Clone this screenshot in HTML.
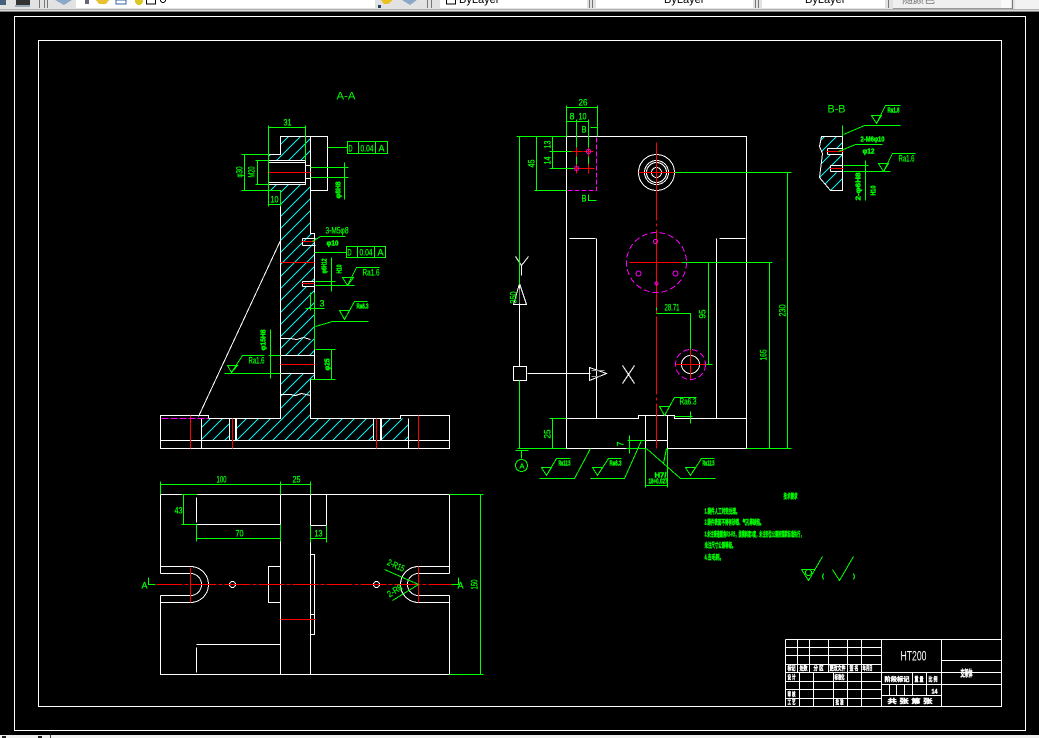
<!DOCTYPE html>
<html><head><meta charset="utf-8"><style>
html,body{margin:0;padding:0;background:#000;width:1039px;height:738px;overflow:hidden}
svg{display:block}
text{font-family:"Liberation Sans","Noto Sans CJK SC",sans-serif}
.w{stroke:#fff;fill:none}
.g{stroke:#0f0;fill:none}
.r{stroke:#f00;fill:none}
.m{stroke:#f0f;fill:none}
.t{fill:#0f0;stroke:#0f0;stroke-width:.25;font-size:9px}
.s{fill:#0f0;stroke:#0f0;stroke-width:.4;font-size:7px;font-weight:bold}
.c{fill:#fff;stroke:#fff;stroke-width:.4;font-size:6px;font-weight:bold}
.b{fill:#000;stroke:none;font-size:11px}
</style></head><body>
<svg width="1039" height="738" viewBox="0 0 1039 738" xmlns="http://www.w3.org/2000/svg" shape-rendering="crispEdges">
<defs>
<clipPath id="ca"><path d="M280 136H310V160H280ZM280 184H310V233H314V281H302V286H314V355H280ZM280 373H314V379H310V418H373V440H380V418H408V440H236V418H229V440H201V418H280ZM268 154H280V160H268ZM268 184H280V190H268Z"/></clipPath>
<clipPath id="cb"><path d="M821 136H842V148H827V154H842V165H830V172H842V190H830L819 177L822 153L819 146Z"/></clipPath>
</defs>
<rect width="1039" height="738" fill="#000"/>
<!-- toolbar -->
<rect width="1039" height="9" fill="#e2e2e2"/>
<rect y="9" width="1039" height="1" fill="#b0b0b0"/>
<rect y="10" width="1039" height="1" fill="#d8d8d8"/>
<rect y="11" width="1039" height="1" fill="#808080"/>
<rect x="76" width="299" height="8" fill="#fff"/>
<rect x="440" width="147" height="8" fill="#fff"/>
<rect x="596" width="157" height="8" fill="#fff"/>
<rect x="762" width="123" height="8" fill="#fff"/>
<rect x="893" width="118" height="8" fill="#f0f0f0"/>
<rect x="1001" width="10" height="8" fill="#fafafa"/>
<rect x="893" y="8" width="119" height="1" fill="#999"/>
<rect x="1015" width="24" height="9" fill="#f2f2f2"/>
<path d="M39.5 0V8M44.5 0V8M47.5 0V8M427.5 0V8M431.5 0V8M589.5 0V8M592.5 0V8M755.5 0V8M758.5 0V8M888.5 0V8M1012.5 0V9" stroke="#777" fill="none"/>
<rect x="0" y="0" width="6" height="5" fill="#47607c"/>
<rect x="16" y="0" width="14" height="5" fill="#333"/>
<rect x="15" y="5" width="15" height="2" fill="#9ab"/>
<path d="M55 0L64 5L72 0Z" fill="#8aa8c8"/>
<rect x="85" y="0" width="4" height="4" fill="#667"/>
<path d="M96 0H109L106 4H99Z" fill="#e8c030"/>
<rect x="116" y="0" width="10" height="4" fill="#fff" stroke="#36a"/>
<circle cx="139" cy="1" r="4" fill="#d8c820"/>
<rect x="146.5" y="-2" width="9" height="6" fill="#fff" stroke="#000"/>
<circle cx="163" cy="0" r="2.5" fill="#fff" stroke="#000"/>
<path d="M381 0H393L388 4H384Z" fill="#e8c020"/>
<path d="M402 0L410 5L417 0Z" fill="#8aa8c8"/>
<rect x="378" y="5" width="3" height="3" fill="#246"/>
<rect x="446.5" y="-2" width="9" height="6" fill="#fff" stroke="#000"/>
<text class="b" x="459" y="3">ByLayer</text>
<text class="b" x="664" y="3">ByLayer</text>
<text class="b" x="805" y="3">ByLayer</text>
<text x="902" y="3" style="font-size:11px;fill:#777">随颜色</text>
<!-- status -->
<rect y="735" width="1039" height="3" fill="#f0f0f0"/>
<rect x="2" y="736" width="4" height="2" fill="#222"/>
<rect x="38" y="736" width="4" height="2" fill="#222"/>
<rect x="50" y="735" width="1" height="3" fill="#444"/>

<g transform="translate(.5 .5)">
<rect x="14" y="16" width="1011" height="714" class="w"/>
<rect x="38" y="40" width="963" height="666" class="w"/>

<!-- hatching -->
<path clip-path="url(#ca)" fill="none" stroke="#00f0f0" d="M200 140L410 -70M200 152L410 -58M200 164L410 -46M200 176L410 -34M200 188L410 -22M200 200L410 -10M200 212L410 2M200 224L410 14M200 236L410 26M200 248L410 38M200 260L410 50M200 272L410 62M200 284L410 74M200 296L410 86M200 308L410 98M200 320L410 110M200 332L410 122M200 344L410 134M200 356L410 146M200 368L410 158M200 380L410 170M200 392L410 182M200 404L410 194M200 416L410 206M200 428L410 218M200 440L410 230M200 452L410 242M200 464L410 254M200 476L410 266M200 488L410 278M200 500L410 290M200 512L410 302M200 524L410 314M200 536L410 326M200 548L410 338M200 560L410 350M200 572L410 362M200 584L410 374M200 596L410 386M200 608L410 398M200 620L410 410M200 632L410 422M200 644L410 434M200 656L410 446"/>
<path clip-path="url(#cb)" fill="none" stroke="#00f0f0" d="M815 145L845 115M815 157L845 127M815 169L845 139M815 181L845 151M815 193L845 163M815 205L845 175M815 217L845 187"/>

<!-- A-A white -->
<g class="w">
<path d="M268 154H280V136H327V190H310V233H314V349M314 349V379H310V418H400V415H449V448H160V415H208V418H280V190H268V154"/>
<path d="M310 136V190M160 440H449M201 418V448M408 418V448M229 418V440M236 418V440M235 418V440M373 418V440M380 418V440M381 418V440"/>
<path d="M268 160H305V184H268ZM268 162H305M268 182H305M305 178H310M305 165H310"/>
<path d="M302 238H315M302 245H315M302 238V245M301 241H303"/>
<path d="M302 281H314M302 286H314M302 281V286"/>
<path d="M280 355H314M280 373H314"/>
<path d="M280 338H290L296 339L303 337L310 339M280 394H290L295 395L301 393L310 395"/>
<path d="M280 240L198 416"/>
</g>
<g class="r">
<path d="M268 172H310M301 241H314M280 262H314M301 283H314M280 364H314M190 415V448M232 418V448M376 418V448M418 415V448"/>
</g>
<path class="m" d="M161 418H208" stroke-dasharray="7 2"/>

<!-- A-A green -->
<g class="g">
<path d="M268 125V206M305 125V160M268 127H305"/>
<path d="M241 154H268M241 190H280M244 154V190M255 160H268M255 184H268M257 160V184M268 204H280M280 190V206"/>
<path d="M310 167H348M310 177H348M344 162V199"/>
<rect x="347" y="141" width="40" height="12"/><path d="M358 141V153M375 141V153M327 147H347"/>
<rect x="346" y="246" width="39" height="11"/><path d="M357 246V257M374 246V257M314 252H346"/>
<path d="M312 241L320 236H345"/>
<path d="M315 281H335M315 285H354M331 257V291"/>
<path d="M342 277H353L347 285ZM347 285L356 267H379"/>
<path d="M314 292V349M310 292V310M305 308H324M315 326L332 321H368"/>
<path d="M339 310H349L344 319ZM344 319L354 301H367"/>
<path d="M270 329V378M268 355H280M224 373H280"/>
<path d="M227 365H237L231 372ZM231 372L242 355H264"/>
<path d="M315 349H335M310 379H335M331 349V379"/>
</g>
<text class="t" x="336" y="99" textLength="19" lengthAdjust="spacingAndGlyphs" style="font-size:11px;stroke-width:0">A-A</text>
<text class="t" x="283" y="125" textLength="8" lengthAdjust="spacingAndGlyphs">31</text>
<text class="t" transform="translate(242 177) rotate(-90)" textLength="11" lengthAdjust="spacingAndGlyphs">φ30</text>
<text class="t" transform="translate(254 177) rotate(-90)" textLength="11" lengthAdjust="spacingAndGlyphs">M20</text>
<text class="t" x="270" y="202" textLength="8" lengthAdjust="spacingAndGlyphs">10</text>
<text class="s" transform="translate(340 198) rotate(-90)" textLength="17" lengthAdjust="spacingAndGlyphs">φ8H8</text>
<text class="t" x="348" y="151" textLength="4" lengthAdjust="spacingAndGlyphs">D</text>
<text class="t" x="360" y="151" textLength="13" lengthAdjust="spacingAndGlyphs">0.04</text>
<text class="t" x="378" y="151" textLength="6" lengthAdjust="spacingAndGlyphs">A</text>
<text class="t" x="347" y="255" textLength="4" lengthAdjust="spacingAndGlyphs">D</text>
<text class="t" x="359" y="255" textLength="13" lengthAdjust="spacingAndGlyphs">0.04</text>
<text class="t" x="377" y="255" textLength="6" lengthAdjust="spacingAndGlyphs">A</text>
<text class="t" x="325" y="233" textLength="23" lengthAdjust="spacingAndGlyphs">3-M5φ8</text>
<text class="s" x="326" y="245" textLength="12" lengthAdjust="spacingAndGlyphs">φ10</text>
<text class="s" transform="translate(326 273) rotate(-90)" textLength="15" lengthAdjust="spacingAndGlyphs">φ6H12</text>
<text class="s" transform="translate(341 273) rotate(-90)" textLength="9" lengthAdjust="spacingAndGlyphs">H10</text>
<text class="t" x="362" y="275" textLength="17" lengthAdjust="spacingAndGlyphs">Ra1.6</text>
<text class="t" x="319" y="306" textLength="5">3</text>
<text class="s" x="356" y="308" textLength="12" lengthAdjust="spacingAndGlyphs">Ra6.3</text>
<text class="s" transform="translate(265 350) rotate(-90)" textLength="21" lengthAdjust="spacingAndGlyphs">φ15H8</text>
<text class="t" x="248" y="363" textLength="16" lengthAdjust="spacingAndGlyphs">Ra1.6</text>
<text class="s" transform="translate(329 370) rotate(-90)" textLength="12" lengthAdjust="spacingAndGlyphs">φ25</text>

<!-- plan view white -->
<g class="w">
<path d="M160 566V494H449V573M449 595V674H160V602M160 566H193M160 573H190M160 573V566M160 595H190M160 595V602H193"/>
<path d="M415 566H449M418 573H449M418 595H449M415 602H449"/>
<path d="M280 494V674M310 494V674M326 494V525H310M196 497V522M196 524H280M196 644H280M196 647V672"/>
<path d="M280 566H268V602H280M310 554H314V634H310M310 614H314"/>
<path d="M190 566A18 18 0 0 1 190 602M190 573A11 11 0 0 1 190 595"/>
<path d="M418 566A18 18 0 0 0 418 602M418 573A11 11 0 0 0 418 595"/>
<circle cx="232" cy="584" r="3"/><circle cx="376" cy="584" r="3"/>
</g>
<g class="r">
<path d="M156 584H451" stroke-dasharray="26 2 4 2"/>
<path d="M190 567V602M418 566V602M280 619H315"/>
</g>
<g class="g">
<path d="M160 481V494M280 481V494M310 481V494M160 484H310"/>
<path d="M181 494H197M181 524H196M183 494V524M196 524V541M280 524V541M196 538H280"/>
<path d="M310 525V542M326 525V542M310 538H326"/>
<path d="M449 494H483M449 674H483M480 494V674"/>
<path d="M148 577V584H155M458 577V584H451"/>
<path d="M384 569L418 584M392 600L418 584"/>
</g>
<text class="t" x="216" y="482" textLength="10" lengthAdjust="spacingAndGlyphs">100</text>
<text class="t" x="292" y="482" textLength="8" lengthAdjust="spacingAndGlyphs">25</text>
<text class="t" x="174" y="513" textLength="8" lengthAdjust="spacingAndGlyphs">43</text>
<text class="t" x="235" y="536" textLength="8" lengthAdjust="spacingAndGlyphs">70</text>
<text class="t" x="314" y="536" textLength="8" lengthAdjust="spacingAndGlyphs">13</text>
<text class="t" x="141" y="588" textLength="6" lengthAdjust="spacingAndGlyphs">A</text>
<text class="t" x="457" y="588" textLength="6" lengthAdjust="spacingAndGlyphs">A</text>
<text class="t" transform="translate(477 589) rotate(-90)" textLength="10" lengthAdjust="spacingAndGlyphs">150</text>
<text class="t" transform="translate(386 564) rotate(24)" textLength="18" lengthAdjust="spacingAndGlyphs">2-R15</text>
<text class="t" transform="translate(389 597) rotate(-32)" textLength="16" lengthAdjust="spacingAndGlyphs">2-R8</text>

<!-- front view white -->
<g class="w">
<path d="M566 136H746V448H667V415M645 415V448H566V136"/>
<path d="M566 418H638V415H674V418H746M596 238V418M569 238H595M716 238V418M719 238H745M645 440H667"/>
<circle cx="656" cy="172" r="18"/><circle cx="656" cy="172" r="12"/><circle cx="656" cy="172" r="10"/><circle cx="656" cy="172" r="5"/>
<circle cx="690" cy="364" r="9"/>
<path d="M513 366H526V380H513ZM527 373H590M519 284V366M589 367L606 373L589 380ZM622 365L634 383M634 365L622 383M515 256L521 265L528 256M521 265V275"/>
<path d="M519 283L513 304H526Z"/>
</g>
<path d="M591 370H604M591 376H600" stroke="#999"/>
<path d="M519 288V303" stroke="#888"/>
<g class="g">
<path d="M516 136H566M534 190H566M519 136V284M519 380V448M536 136V190"/>
<path d="M549 151H574M549 168H574M552 136V168"/>
<path d="M566 105V136M597 105V136M566 107H597M566 121H588M576 119V170M588 119V170"/>
<path d="M590 127H597M588 194V200H596"/>
<path d="M674 172H791M787 172V448M681 262H772M708 262V364M769 262V448M656 290V313H690V350M706 364H712"/>
<path d="M517 448H566M746 448H791M626 448H645M515 450H528M521 450V458M549 418H566M552 418V448"/>
<circle cx="521" cy="465" r="6"/>
<path d="M539 478H574L590 448M541 467H551L546 475ZM546 475L556 458H570"/>
<path d="M590 478H624L641 440M592 467H602L597 475ZM597 475L608 458H621"/>
<path d="M715 478H680L646 448M685 467H695L690 475ZM690 475L701 458H714"/>
<path d="M666 448L663 463M629 435V453M627 440H645M645 448V487M667 448V487M645 485H667"/>
<path d="M659 406H669L664 415ZM664 415L674 397H696M674 416H692M690 411V423"/>
</g>
<g class="r">
<path d="M656 142V448" stroke-dasharray="78 3 3 3"/>
<path d="M638 172H674M629 262H681M675 364H706M690 349V380"/>
<path d="M571 151H582M573 168H594M583 151H593"/>
<path d="M576 147V156M588 147V156M576 164V173M588 164V173"/>
</g>
<g class="m">
<path d="M596 137V190H567" stroke-dasharray="5 2" stroke-width="1"/>
<circle cx="656" cy="262" r="30" stroke-dasharray="6 3"/>
<circle cx="690" cy="364" r="15" stroke-dasharray="6 3"/>
<circle cx="638" cy="273" r="2.5"/><circle cx="675" cy="273" r="2.5"/>
<circle cx="655" cy="241" r="2"/><circle cx="656" cy="283" r="1.5"/>
<circle cx="576" cy="168" r="2"/><circle cx="588" cy="151" r="2"/>
</g>
<text class="t" x="578" y="105" textLength="9" lengthAdjust="spacingAndGlyphs">26</text>
<text class="t" x="569" y="119" textLength="4">8</text>
<text class="t" x="578" y="119" textLength="8" lengthAdjust="spacingAndGlyphs">10</text>
<text class="t" x="581" y="132" textLength="5" lengthAdjust="spacingAndGlyphs">B</text>
<text class="t" x="581" y="201" textLength="5" lengthAdjust="spacingAndGlyphs">B</text>
<text class="t" transform="translate(534 167) rotate(-90)" textLength="8" lengthAdjust="spacingAndGlyphs">45</text>
<text class="t" transform="translate(550 148) rotate(-90)" textLength="8" lengthAdjust="spacingAndGlyphs">13</text>
<text class="t" transform="translate(550 164) rotate(-90)" textLength="8" lengthAdjust="spacingAndGlyphs">14</text>
<text class="t" transform="translate(516 303) rotate(-90)" textLength="12" lengthAdjust="spacingAndGlyphs">350</text>
<text class="t" x="664" y="310" textLength="15" lengthAdjust="spacingAndGlyphs">28.71</text>
<text class="t" transform="translate(705 318) rotate(-90)" textLength="9" lengthAdjust="spacingAndGlyphs">95</text>
<text class="t" transform="translate(766 360) rotate(-90)" textLength="11" lengthAdjust="spacingAndGlyphs">165</text>
<text class="t" transform="translate(785 316) rotate(-90)" textLength="12" lengthAdjust="spacingAndGlyphs">230</text>
<text class="t" transform="translate(550 438) rotate(-90)" textLength="9" lengthAdjust="spacingAndGlyphs">25</text>
<text class="t" transform="translate(623 446) rotate(-90)" textLength="5">7</text>
<text class="t" x="519" y="468" textLength="5" lengthAdjust="spacingAndGlyphs" style="font-size:7px">A</text>
<text class="s" x="558" y="465" textLength="12" lengthAdjust="spacingAndGlyphs">Ra12.5</text>
<text class="s" x="609" y="465" textLength="12" lengthAdjust="spacingAndGlyphs">Ra6.3</text>
<text class="s" x="702" y="465" textLength="12" lengthAdjust="spacingAndGlyphs">Ra12.5</text>
<text class="t" x="679" y="404" textLength="17" lengthAdjust="spacingAndGlyphs">Ra6.3</text>
<text class="s" x="648" y="483" textLength="19" lengthAdjust="spacingAndGlyphs">18+0.027</text>
<text class="s" x="654" y="477" textLength="12" lengthAdjust="spacingAndGlyphs">H7/</text>

<!-- B-B -->
<path class="w" d="M842 136H821L819 146L822 153L819 177L830 190H842ZM827 148H842M827 154H842M827 148V154M830 165H842M830 171H842M830 165V171"/>
<path class="r" d="M826 151H843M829 168H843"/>
<g class="g">
<path d="M842 125V136M843 134L864 125H900M871 115H881L876 123ZM876 123L885 105H900"/>
<path d="M838 151L855 144H882M843 165H868M843 171H890M865 160V200M878 163H888L883 171ZM883 171L892 153H915"/>
</g>
<text class="t" x="827" y="112" textLength="18" lengthAdjust="spacingAndGlyphs" style="font-size:11px;stroke-width:0">B-B</text>
<text class="s" x="887" y="112" textLength="12" lengthAdjust="spacingAndGlyphs">Ra1.6</text>
<text class="s" x="860" y="141" textLength="24" lengthAdjust="spacingAndGlyphs">2-M6φ10</text>
<text class="s" x="862" y="153" textLength="12" lengthAdjust="spacingAndGlyphs">φ12</text>
<text class="t" x="898" y="161" textLength="16" lengthAdjust="spacingAndGlyphs">Ra1.6</text>
<text class="s" transform="translate(860 200) rotate(-90)" textLength="28" lengthAdjust="spacingAndGlyphs">2-φ6H8</text>
<text class="s" transform="translate(875 195) rotate(-90)" textLength="10" lengthAdjust="spacingAndGlyphs">H10</text>

<!-- notes -->
<text class="s" x="783" y="498" textLength="14" lengthAdjust="spacingAndGlyphs">技术要求</text>
<text class="s" x="704" y="513" textLength="35" lengthAdjust="spacingAndGlyphs">1.铸件人工时效处理。</text>
<text class="s" x="704" y="524" textLength="59" lengthAdjust="spacingAndGlyphs">2.铸件表面不得有砂眼、气孔等缺陷。</text>
<text class="s" x="704" y="536" textLength="99" lengthAdjust="spacingAndGlyphs">3.未注铸造圆角R3-R5，拔模斜度3度，未注形位公差按国家标准执行，</text>
<text class="s" x="704" y="547" textLength="31" lengthAdjust="spacingAndGlyphs">未注尺寸公差等级。</text>
<text class="s" x="704" y="559" textLength="19" lengthAdjust="spacingAndGlyphs">4.去毛刺。</text>
<g class="g">
<path d="M801 569L808 580L822 556M801 569H814"/>
<circle cx="808" cy="572" r="3"/>
<path d="M832 569L839 580L853 556M823 573L822 576L823 579M853 573L854 576L853 579"/>
</g>

<!-- title block -->
<g class="w">
<path d="M785 639H1001M785 639V706M881 639V706M941 639V706"/>
<path d="M785 647H881M785 655H881M785 664H881M785 672H1001M785 681H881M785 689H881M785 698H881"/>
<path d="M797 639V672M809 639V672M828 639V672M847 639V672M861 639V672"/>
<path d="M799 672V706M813 672V706M833 672V706M847 672V706M861 672V706"/>
<path d="M881 684H1001M881 695H941M912 672V695M926 672V695M889 684V695M896 684V695M904 684V695M941 660H1001"/>
</g>
<text x="900" y="660" textLength="26" lengthAdjust="spacingAndGlyphs" style="fill:#fff;font-size:14px">HT200</text>
<text x="960" y="676" textLength="12" lengthAdjust="spacingAndGlyphs" style="fill:#fff;stroke:#fff;stroke-width:.5;font-size:9px;font-weight:bold">支架体</text>
<text class="c" x="787" y="670" textLength="8" lengthAdjust="spacingAndGlyphs">标记</text>
<text class="c" x="799" y="670" textLength="8" lengthAdjust="spacingAndGlyphs">处数</text>
<text class="c" x="813" y="670" textLength="10" lengthAdjust="spacingAndGlyphs">分 区</text>
<text class="c" x="829" y="670" textLength="16" lengthAdjust="spacingAndGlyphs">更改文件</text>
<text class="c" x="849" y="670" textLength="9" lengthAdjust="spacingAndGlyphs">签 名</text>
<text class="c" x="862" y="670" textLength="10" lengthAdjust="spacingAndGlyphs">年月日</text>
<text class="c" x="787" y="679" textLength="8" lengthAdjust="spacingAndGlyphs">设 计</text>
<text class="c" x="834" y="679" textLength="10" lengthAdjust="spacingAndGlyphs">标准化</text>
<text class="c" x="787" y="696" textLength="8" lengthAdjust="spacingAndGlyphs">审 核</text>
<text class="c" x="787" y="704" textLength="8" lengthAdjust="spacingAndGlyphs">工 艺</text>
<text class="c" x="835" y="704" textLength="8" lengthAdjust="spacingAndGlyphs">批 准</text>
<text class="c" x="884" y="681" textLength="25" lengthAdjust="spacingAndGlyphs">阶段标记</text>
<text class="c" x="914" y="681" textLength="9" lengthAdjust="spacingAndGlyphs">重 量</text>
<text class="c" x="928" y="681" textLength="9" lengthAdjust="spacingAndGlyphs">比 例</text>
<text class="c" x="931" y="693" textLength="6" lengthAdjust="spacingAndGlyphs">14</text>
<text class="c" x="887" y="703" textLength="45" lengthAdjust="spacingAndGlyphs">共 张 第 张</text>
</g>
</svg>
</body></html>
